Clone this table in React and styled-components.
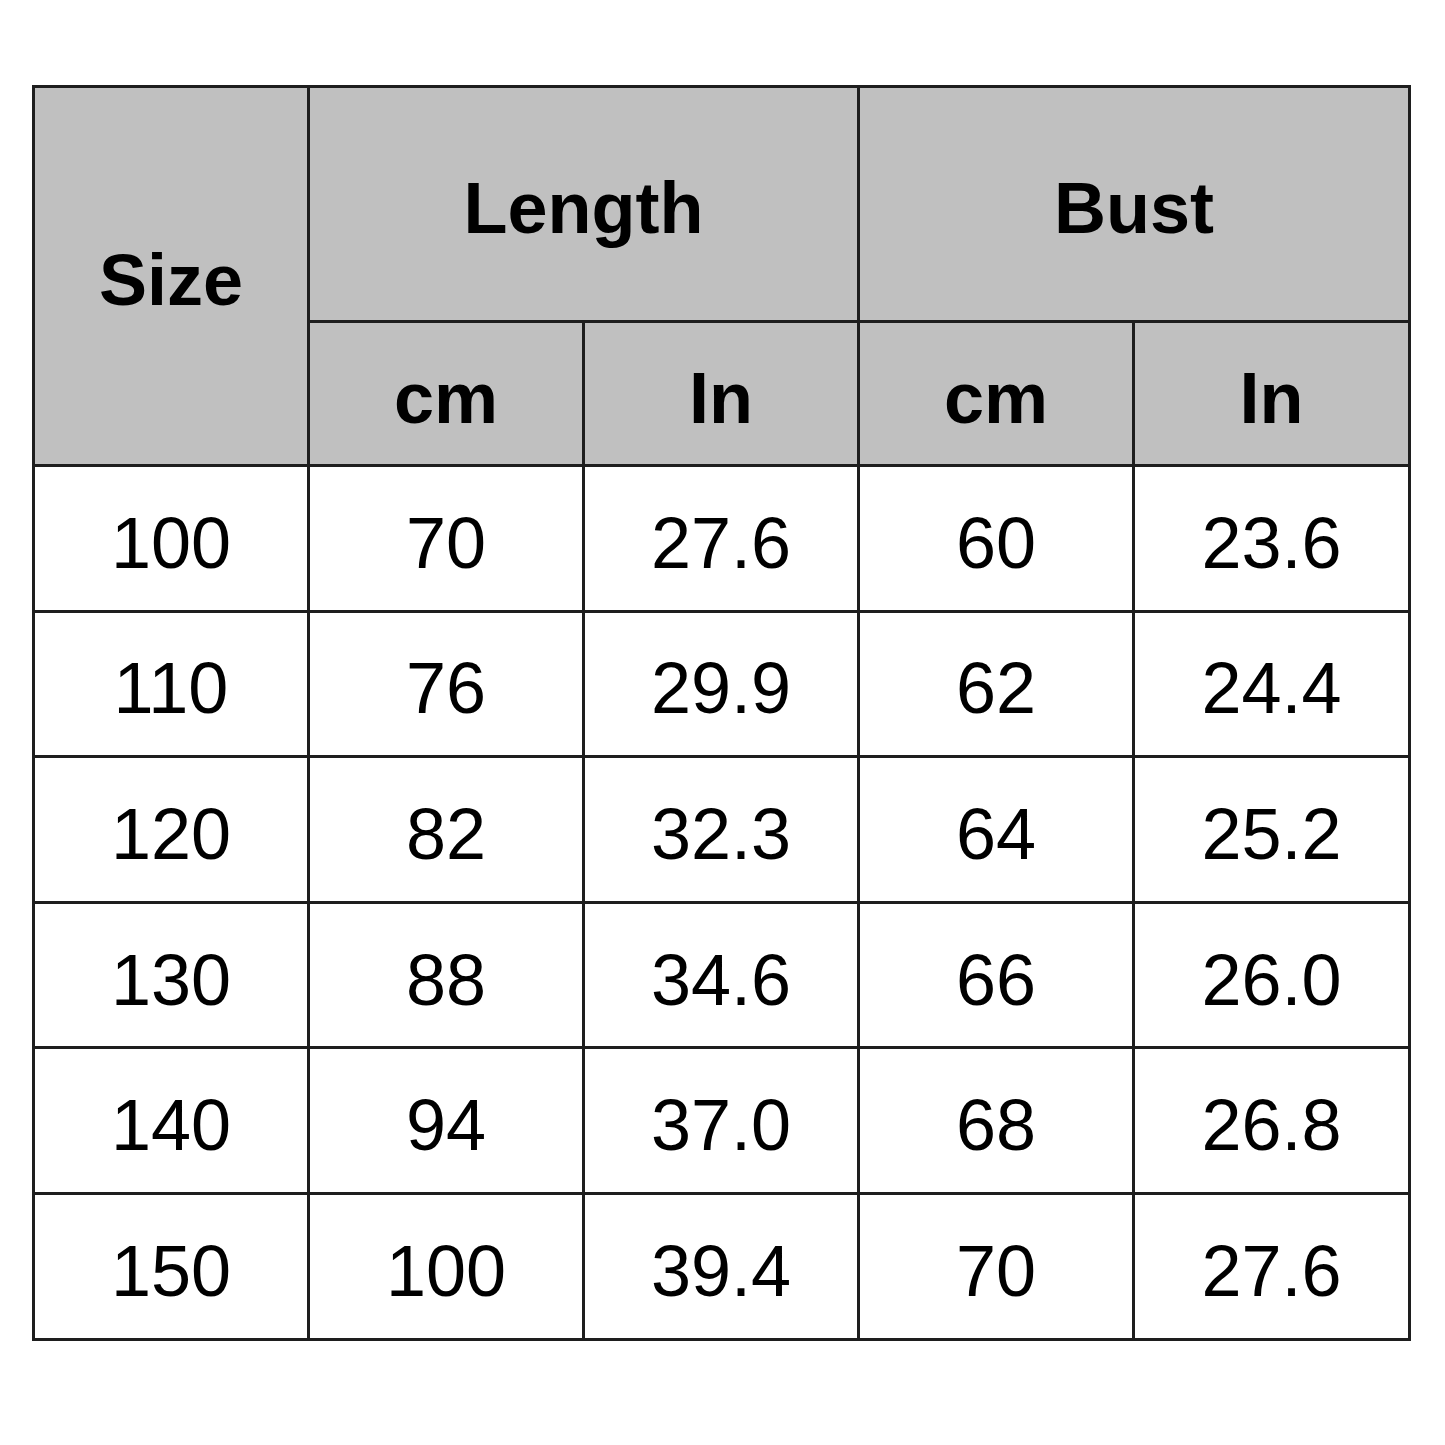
import React from "react";
import styled, { createGlobalStyle } from "styled-components";

const GlobalStyle = createGlobalStyle`
  html, body {
    margin: 0;
    padding: 0;
    background: #ffffff;
    font-family: "Liberation Sans", Arial, sans-serif;
  }
`;

const Page = styled.div`
  width: 1445px;
  height: 1445px;
  padding: 85px 0 0 32px;
  box-sizing: border-box;
`;

const Table = styled.table`
  border-collapse: collapse;
  table-layout: fixed;
  width: 1378px;
  color: #000;
`;

const Head = styled.th`
  background: #c0c0c0;
  border: 3px solid #1e1e1e;
  font-size: 72px;
  font-weight: 700;
  text-align: center;
  vertical-align: middle;
  padding: 8px 0 0;
  height: ${(p) => p.$h}px;
  box-sizing: border-box;
`;

const Cell = styled.td`
  border: 3px solid #1e1e1e;
  font-size: 72px;
  font-weight: 400;
  text-align: center;
  vertical-align: middle;
  padding: 9px 0 0;
  height: 145.6px;
  box-sizing: border-box;
`;

const rows = [
  ["100", "70", "27.6", "60", "23.6"],
  ["110", "76", "29.9", "62", "24.4"],
  ["120", "82", "32.3", "64", "25.2"],
  ["130", "88", "34.6", "66", "26.0"],
  ["140", "94", "37.0", "68", "26.8"],
  ["150", "100", "39.4", "70", "27.6"],
];

export default function App() {
  return (
    <>
      <GlobalStyle />
      <Page>
        <Table>
          <colgroup>
            <col style={{ width: 275 }} />
            <col style={{ width: 275 }} />
            <col style={{ width: 275 }} />
            <col style={{ width: 275 }} />
            <col style={{ width: 276 }} />
          </colgroup>
          <thead>
            <tr>
              <Head rowSpan={2}>Size</Head>
              <Head colSpan={2} $h={235}>Length</Head>
              <Head colSpan={2} $h={235}>Bust</Head>
            </tr>
            <tr>
              <Head $h={144}>cm</Head>
              <Head $h={144}>In</Head>
              <Head $h={144}>cm</Head>
              <Head $h={144}>In</Head>
            </tr>
          </thead>
          <tbody>
            {rows.map((r) => (
              <tr key={r[0]}>
                {r.map((v, i) => (
                  <Cell key={i}>{v}</Cell>
                ))}
              </tr>
            ))}
          </tbody>
        </Table>
      </Page>
    </>
  );
}
